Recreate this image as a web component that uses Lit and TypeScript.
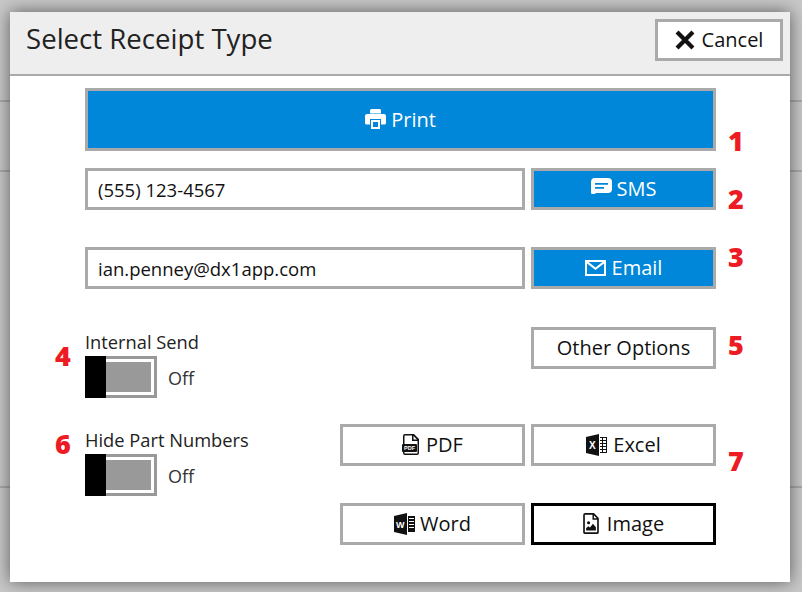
import { LitElement, html, css, svg } from "lit";
import { customElement } from "lit/decorators.js";

const icons = {
  print: svg`<path fill="currentColor" d="M6 0h9l1 1v3.500H5V1z"/><path fill="currentColor" d="M2 5h17a2 2 0 0 1 2 2v7a1.500 1.500 0 0 1-1.500 1.500H16V10H5v5.500H1.500A1.500 1.500 0 0 1 0 14V7a2 2 0 0 1 2-2z"/><path fill="currentColor" fill-rule="evenodd" d="M6 11h9v9H6zM8 13v5h5v-5z"/>`,
  sms: svg`<path fill="currentColor" fill-rule="evenodd" d="M4 0h13a4 4 0 0 1 4 4v7a4 4 0 0 1-4 4H5l-1.500 1H1a1 1 0 0 1-1-1V4a4 4 0 0 1 4-4zM4 5v1.700h13V5zM4 9v1.700h9V9z"/>`,
  mail: svg`<path fill="currentColor" fill-rule="evenodd" d="M0 0h21v16H0zM2 3.500V14h17V3.500l-8.500 6.500zM3.500 2l7 5.500 7-5.500z"/>`,
  x: svg`<path fill="none" stroke="currentColor" stroke-width="3.600" stroke-linecap="square" d="M3 3l11 11M14 3L3 14"/>`,
  pdf: svg`<path fill="currentColor" fill-rule="evenodd" d="M3 0h9l5 5v14a2 2 0 0 1-2 2H3a2 2 0 0 1-2-2V2a2 2 0 0 1 2-2zM3 1.500a.5.5 0 0 0-.5.500v17a.5.5 0 0 0 .5.500h12a.5.5 0 0 0 .5-.500V7H10V1.500zM11.500 2v3.500H15z"/><rect fill="currentColor" x="0" y="10" width="15" height="8" rx="1"/><text class="mini" x="7.500" y="16" font-size="5.500" fill="#fff" text-anchor="middle">PDF</text>`,
  excel: svg`<path fill="currentColor" d="M0 3l13-3v22L0 19z"/><text class="mini" x="6.300" y="15" font-size="10" fill="#fff" text-anchor="middle">X</text><path fill="currentColor" d="M14 3h7v16h-7v-1h2v-2h-2v-1h2v-2h-2v-1h2v-2h-2V9h2V7h-2V6h2V4h-2zM17 4v2h3V4zM17 7v2h3V7zM17 10v2h3v-2zM17 13v2h3v-2zM17 16v2h3v-2z"/>`,
  word: svg`<path fill="currentColor" d="M0 3l13-3v22L0 19z"/><text class="mini" x="6.300" y="15" font-size="9" fill="#fff" text-anchor="middle">W</text><path fill="currentColor" fill-rule="evenodd" d="M14 3h7v16h-7zM15 5v1h5V5zM15 8v1h5V8zM15 11v1h5v-1zM15 14v1h5v-1z"/>`,
  image: svg`<path fill="currentColor" fill-rule="evenodd" d="M2 0h9l5 5v15a1.500 1.500 0 0 1-1.500 1.500h-13A1.500 1.500 0 0 1 0 20V2a2 2 0 0 1 2-2zM1.700 1.700v18h12.600V7H9.500V1.700zM11 2.500v3h3z"/><circle fill="currentColor" cx="5.500" cy="10" r="1.600"/><path fill="currentColor" d="M3 18v-2.500l2.200-2 1.800 1.300L10 11l3 3.500V18z"/>`,
};

const icon = (name: keyof typeof icons, w: number, h: number, vw: number, vh: number) =>
  html`<svg class="ic" width=${w} height=${h} viewBox="0 0 ${vw} ${vh}">${icons[name]}</svg>`;

@customElement("app-root")
export class AppRoot extends LitElement {
  static styles = css`
    :host { display: block; position: relative; width: 802px; height: 592px; overflow: hidden; background: #c8c8c8; font-family: "Open Sans", "Noto Sans", sans-serif; color: #111; }
    .bg-row { height: 70px; border-bottom: 2px solid #a9a9a9; box-sizing: border-box; }
    .bg-first { height: 102px; }
    .bg-tall { height: 316px; }
    .modal { position: absolute; left: 10px; top: 12px; width: 780px; height: 570px; background: #fff; box-shadow: 0 0 16px rgba(0,0,0,.55); display: flex; flex-direction: column; }
    .head { height: 64px; box-sizing: border-box; background: #eee; border-bottom: 2px solid #aaa; display: flex; align-items: flex-start; justify-content: space-between; padding: 7px 7px 0 16px; }
    h1 { margin: 0; font-size: 27.600px; line-height: 38px; font-weight: 400; color: #222; }
    .btn { box-sizing: border-box; width: 185px; height: 42px; border: 3px solid #aaa; background: #fff; color: #111; font: inherit; font-size: 20px; display: flex; align-items: center; justify-content: center; gap: 5px; padding: 0 0 1px; }
    .cancel { width: 128px; gap: 7px; }
    .g4 { gap: 5px; }
    .g6 { gap: 6px; }
    .g7 { gap: 7px; }
    .g8 { gap: 8px; }
    .blue { background: #0087d9; color: #fff; }
    .print { width: 100%; height: 63px; }
    .dark { border-color: #000; }
    .body { position: relative; flex: 1; padding: 12px 74px 0 75px; display: flex; flex-direction: column; }
    .row { display: flex; gap: 6px; margin-top: 17px; }
    .row-b { margin-top: 37px; }
    .input { box-sizing: border-box; flex: 1; height: 42px; border: 3px solid #aaa; background: #fff; font: inherit; font-size: 18.500px; color: #111; padding: 0 10px; outline: none; min-width: 0; }
    .opts { display: flex; justify-content: space-between; align-items: flex-start; margin-top: 38px; height: 71px; }
    .lower { display: flex; justify-content: space-between; margin-top: 26px; }
    .lab { font-size: 18.300px; line-height: 24px; color: #222; margin-bottom: 2px; }
    .opt-l { margin-top: 3px; }
    .low-l { margin-top: 4px; }
    .tog-row { display: flex; align-items: center; gap: 11px; }
    .tog { width: 72px; height: 42px; box-sizing: border-box; display: flex; border: 3px solid #999; border-left: 0; background: #fff; padding: 3px 3px 3px 0; }
    .knob { width: 21px; margin: -6px 0; background: #000; flex: none; }
    .fill { flex: 1; background: #999; }
    .off { font-size: 18px; color: #333; padding-top: 2px; }
    .grid { display: grid; grid-template-columns: 185px 185px; column-gap: 6px; row-gap: 37px; }
    .ic { flex: none; }
    .up { position: relative; top: -3px; }
    .mini { font-family: "Liberation Sans", sans-serif; font-weight: 700; }
    .n { position: absolute; left: 706px; width: 40px; text-align: center; color: #ed1c24; font: 800 27px/30px "Open Sans", sans-serif; }
    .n.l { left: 33px; }
  `;

  private tog(label: string, cls: string) {
    return html`<div class=${cls}>
      <div class="lab">${label}</div>
      <div class="tog-row">
        <div class="tog"><div class="knob"></div><div class="fill"></div></div>
        <span class="off">Off</span>
      </div>
    </div>`;
  }

  render() {
    return html`
      <div class="bg-row bg-first"></div>
      <div class="bg-row"></div>
      <div class="bg-row bg-tall"></div>
      <div class="modal">
        <div class="head">
          <h1>Select Receipt Type</h1>
          <button class="btn cancel">${icon("x", 20, 20, 17, 17)}Cancel</button>
        </div>
        <div class="body">
          <button class="btn blue print g4">${icon("print", 21, 20, 21, 20)}Print</button>
          <div class="row">
            <input class="input" .value=${"(555) 123-4567"} />
            <button class="btn blue">${html`<svg class="ic up" width="21" height="16" viewBox="0 0 21 16">${icons.sms}</svg>`}SMS</button>
          </div>
          <div class="row row-b">
            <input class="input" .value=${"ian.penney@dx1app.com"} />
            <button class="btn blue g6">${icon("mail", 21, 16, 21, 16)}Email</button>
          </div>
          <div class="opts">
            ${this.tog("Internal Send", "opt-l")}
            <button class="btn">Other Options</button>
          </div>
          <div class="lower">
            ${this.tog("Hide Part Numbers", "low-l")}
            <div class="grid">
              <button class="btn g7">${icon("pdf", 17, 21, 17, 21)}PDF</button>
              <button class="btn g6">${icon("excel", 21, 22, 21, 22)}Excel</button>
              <button class="btn">${icon("word", 21, 22, 21, 22)}Word</button>
              <button class="btn dark g8">${icon("image", 16, 21, 16, 21.500)}Image</button>
            </div>
          </div>
          <span class="n" style="top:50px">1</span>
          <span class="n" style="top:108px">2</span>
          <span class="n" style="top:166px">3</span>
          <span class="n l" style="top:265px">4</span>
          <span class="n" style="top:254px">5</span>
          <span class="n l" style="top:353px">6</span>
          <span class="n" style="top:370px">7</span>
        </div>
      </div>
    `;
  }
}
